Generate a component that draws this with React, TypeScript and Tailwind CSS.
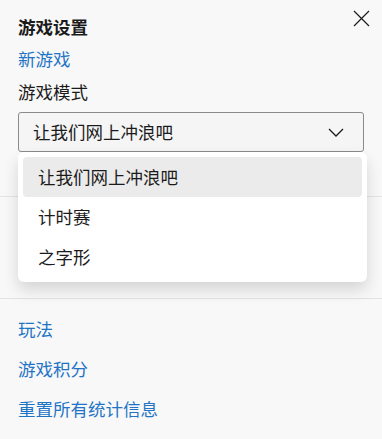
import React from "react";

export default function App() {
  const font = { fontFamily: '"Noto Sans CJK SC", "Microsoft YaHei", sans-serif' };
  return (
    <div
      className="relative w-[382px] h-[439px] overflow-hidden bg-[#f8f8f8] text-[#1b1b1b] text-[17.5px] leading-[22px] font-['Noto_Sans_CJK_SC',sans-serif]"
      style={font}
    >
      <div className="px-[18px] pt-[16px]">
        <div className="flex items-start justify-between">
          <div className="font-bold">游戏设置</div>
          <button className="-mt-[6px] -mr-[6px] p-0 text-[#1b1b1b]" aria-label="关闭">
            <svg width="17" height="17" viewBox="0 0 17 17" fill="none" stroke="currentColor" strokeWidth="1.2">
              <path d="M1 1 L16 16 M16 1 L1 16" />
            </svg>
          </button>
        </div>
        <div className="mt-[10px] text-[#1f74c6]">新游戏</div>
        <div className="mt-[11px]">游戏模式</div>
        <div className="mt-[9px] h-[40px] flex items-center justify-between rounded-[3px] border border-[#8a8a8a] bg-[#f5f5f5] pl-[14px] pr-[19px]">
          <span>让我们网上冲浪吧</span>
          <svg width="16" height="9" viewBox="0 0 16 9" fill="none" stroke="#1b1b1b" strokeWidth="1.3">
            <path d="M1 1 L8 8 L15 1" />
          </svg>
        </div>
      </div>
      <div className="h-[45px] border-b border-[#e3e3e3]" />
      <div className="h-[102px] border-b border-[#e3e3e3]" />
      <div className="px-[18px] pt-[19px] flex flex-col gap-[18px] text-[#1f74c6]">
        <div>玩法</div>
        <div>游戏积分</div>
        <div>重置所有统计信息</div>
      </div>

      <div className="absolute left-[18px] top-[152px] w-[349px] rounded-[6px] bg-white p-[5px] shadow-[0_8px_16px_rgba(0,0,0,0.14)]">
        <div className="h-[40px] flex items-center rounded-[4px] bg-[#ebebeb] pl-[15px]">让我们网上冲浪吧</div>
        <div className="h-[40px] flex items-center pl-[15px]">计时赛</div>
        <div className="h-[40px] flex items-center pl-[15px]">之字形</div>
      </div>
    </div>
  );
}
